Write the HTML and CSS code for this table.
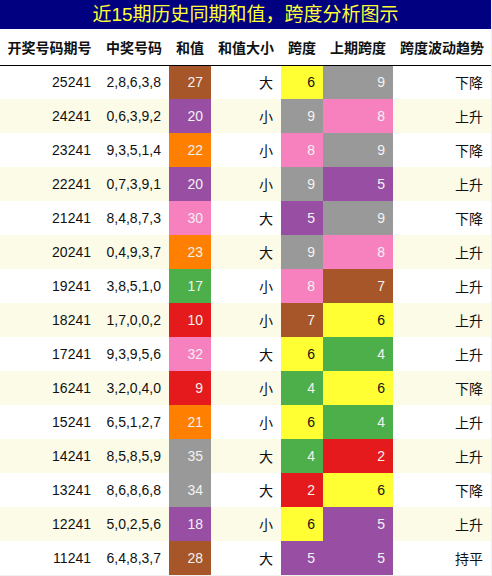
FILE: index.html
```html
<!DOCTYPE html>
<html lang="zh-CN">
<head>
    <meta charset="UTF-8">
    <meta name="viewport" content="width=device-width, initial-scale=1.0">
    <title>跨度分析图示</title>
    <link rel="stylesheet" href="styles.css">
</head>
<body>
    <div class="chart">
        <div class="chart-title">近15期历史同期和值，跨度分析图示</div>
        <table class="span-table">
            <colgroup>
                <col class="w99">
                <col class="w70">
                <col class="w42">
                <col class="w70">
                <col class="w42">
                <col class="w70">
                <col class="w98">
            </colgroup>
            <thead>
                <tr>
                    <th>开奖号码期号</th>
                    <th>中奖号码</th>
                    <th>和值</th>
                    <th>和值大小</th>
                    <th>跨度</th>
                    <th>上期跨度</th>
                    <th>跨度波动趋势</th>
                </tr>
            </thead>
            <tbody>
                <tr><td>25241</td><td>2,8,6,3,8</td><td class="c-brown">27</td><td>大</td><td class="c-yellow">6</td><td class="c-gray">9</td><td>下降</td></tr>
                <tr><td>24241</td><td>0,6,3,9,2</td><td class="c-purple">20</td><td>小</td><td class="c-gray">9</td><td class="c-pink">8</td><td>上升</td></tr>
                <tr><td>23241</td><td>9,3,5,1,4</td><td class="c-orange">22</td><td>小</td><td class="c-pink">8</td><td class="c-gray">9</td><td>下降</td></tr>
                <tr><td>22241</td><td>0,7,3,9,1</td><td class="c-purple">20</td><td>小</td><td class="c-gray">9</td><td class="c-purple">5</td><td>上升</td></tr>
                <tr><td>21241</td><td>8,4,8,7,3</td><td class="c-pink">30</td><td>大</td><td class="c-purple">5</td><td class="c-gray">9</td><td>下降</td></tr>
                <tr><td>20241</td><td>0,4,9,3,7</td><td class="c-orange">23</td><td>大</td><td class="c-gray">9</td><td class="c-pink">8</td><td>上升</td></tr>
                <tr><td>19241</td><td>3,8,5,1,0</td><td class="c-green">17</td><td>小</td><td class="c-pink">8</td><td class="c-brown">7</td><td>上升</td></tr>
                <tr><td>18241</td><td>1,7,0,0,2</td><td class="c-red">10</td><td>小</td><td class="c-brown">7</td><td class="c-yellow">6</td><td>上升</td></tr>
                <tr><td>17241</td><td>9,3,9,5,6</td><td class="c-pink">32</td><td>大</td><td class="c-yellow">6</td><td class="c-green">4</td><td>上升</td></tr>
                <tr><td>16241</td><td>3,2,0,4,0</td><td class="c-red">9</td><td>小</td><td class="c-green">4</td><td class="c-yellow">6</td><td>下降</td></tr>
                <tr><td>15241</td><td>6,5,1,2,7</td><td class="c-orange">21</td><td>小</td><td class="c-yellow">6</td><td class="c-green">4</td><td>上升</td></tr>
                <tr><td>14241</td><td>8,5,8,5,9</td><td class="c-gray">35</td><td>大</td><td class="c-green">4</td><td class="c-red">2</td><td>上升</td></tr>
                <tr><td>13241</td><td>8,6,8,6,8</td><td class="c-gray">34</td><td>大</td><td class="c-red">2</td><td class="c-yellow">6</td><td>下降</td></tr>
                <tr><td>12241</td><td>5,0,2,5,6</td><td class="c-purple">18</td><td>小</td><td class="c-yellow">6</td><td class="c-purple">5</td><td>上升</td></tr>
                <tr><td>11241</td><td>6,4,8,3,7</td><td class="c-brown">28</td><td>大</td><td class="c-purple">5</td><td class="c-purple">5</td><td>持平</td></tr>
            </tbody>
        </table>
    </div>
</body>
</html>
```

FILE: styles.css
```css
* {
    margin: 0;
    padding: 0;
    box-sizing: border-box;
}

body {
    font-family: "Liberation Sans", "Noto Sans CJK SC", sans-serif;
    background: #f0f0f0;
    color: #111;
}

.chart {
    width: 491px;
    background: white;
}

.chart-title {
    height: 29px;
    line-height: 29px;
    background: #000080;
    color: #ffff33;
    font-size: 19px;
    text-align: center;
}

.span-table {
    width: 491px;
    table-layout: fixed;
    border-collapse: collapse;
}

.w99 { width: 99px; }
.w70 { width: 70px; }
.w42 { width: 42px; }
.w98 { width: 98px; }

.span-table th {
    height: 36px;
    font-size: 14px;
    font-weight: bold;
    text-align: center;
    white-space: nowrap;
    border-bottom: 1px solid #000;
}

.span-table td {
    height: 34px;
    padding-right: 8px;
    font-size: 14px;
    text-align: right;
    white-space: nowrap;
}

.span-table tbody tr:nth-child(even) {
    background: #fcfbe8;
}

.c-red { background: #e41a1c; color: #f2f2f2; }
.c-green { background: #4daf4a; color: #f2f2f2; }
.c-purple { background: #984ea3; color: #f2f2f2; }
.c-orange { background: #ff7f00; color: #f2f2f2; }
.c-yellow { background: #ffff33; color: #111; }
.c-brown { background: #a65628; color: #f2f2f2; }
.c-pink { background: #f781bf; color: #f2f2f2; }
.c-gray { background: #999999; color: #f2f2f2; }
```
